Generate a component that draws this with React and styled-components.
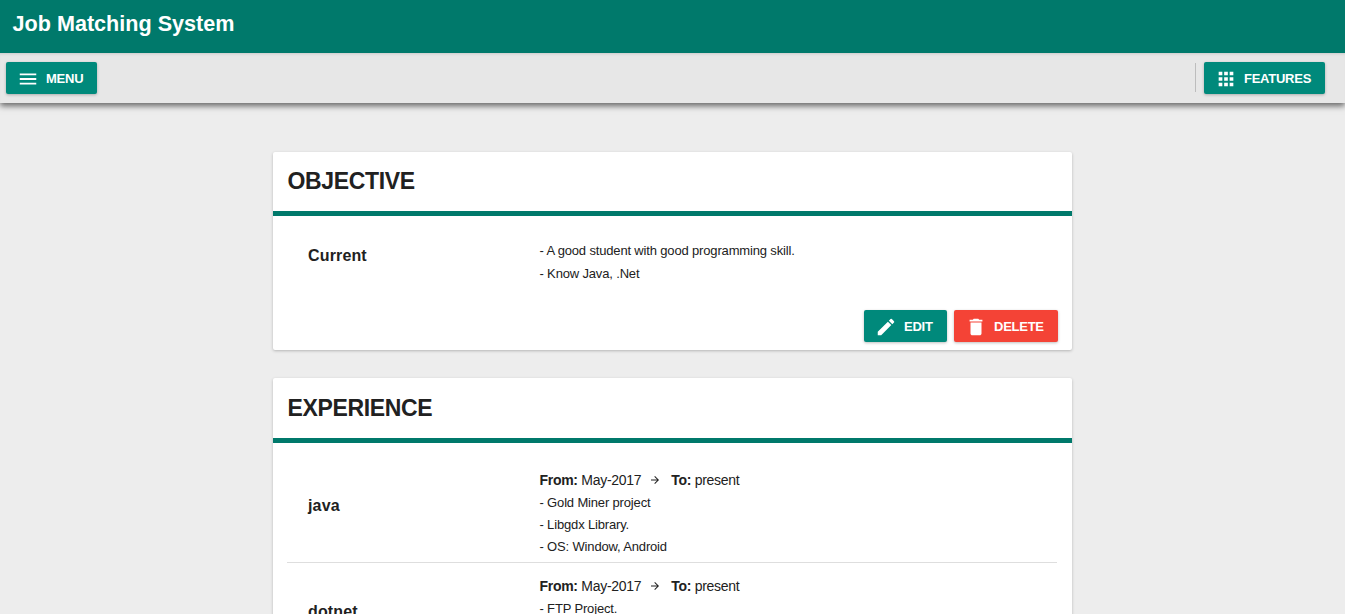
import React from "react";
import styled, { createGlobalStyle } from "styled-components";

const GlobalStyle = createGlobalStyle`
  * { box-sizing: border-box; }
  html, body { margin: 0; height: 100%; overflow: hidden; }
  body {
    background: #ededed;
    color: #212121;
    font-family: "Liberation Sans", Arial, sans-serif;
  }
`;

const Page = styled.div`
  height: 614px;
  overflow: hidden;
`;

const Header = styled.header`
  position: relative;
  z-index: 1;
  height: 53px;
  padding: 10px 12.5px 0;
  background: #00796b;
`;

const Title = styled.h1`
  margin: 0;
  font-size: 21.6px;
  line-height: 27px;
  font-weight: 700;
  color: #fff;
  white-space: nowrap;
`;

const Toolbar = styled.nav`
  display: flex;
  align-items: flex-start;
  justify-content: space-between;
  height: 50px;
  padding: 9px 20px 0 6px;
  background: #e7e7e7;
  box-shadow: 0 3px 6px rgba(0, 0, 0, 0.57), inset 0 3px 3px -2px rgba(0, 0, 0, 0.12);
`;

const ToolbarEnd = styled.div`
  display: flex;
  align-items: flex-start;
`;

const Divider = styled.span`
  width: 1px;
  height: 29px;
  margin: 1px 8px 0 0;
  background: #bdbdbd;
`;

const Button = styled.button`
  display: flex;
  align-items: center;
  width: ${(p) => p.$width}px;
  height: 32px;
  padding: 0 0 0 11px;
  border: 0;
  border-radius: 2px;
  background: ${(p) => (p.$danger ? "#f44336" : "#00897b")};
  box-shadow: 0 1px 3px rgba(0, 0, 0, 0.26);
  color: #fff;
  font: 700 13px/32px "Liberation Sans", Arial, sans-serif;
  letter-spacing: -0.25px;
  white-space: nowrap;

  svg {
    flex: none;
    width: 22px;
    height: 22px;
    margin: 2px 7px 0 0;
    fill: currentColor;
  }
`;

const Label = styled.span`
  padding-top: 1px;
`;

const Main = styled.main`
  display: flex;
  flex-direction: column;
  gap: 28px;
  width: 799px;
  margin: 49px 0 0 273px;
`;

const Card = styled.section`
  background: #fff;
  border-radius: 2px;
  box-shadow: 0 1px 3px rgba(0, 0, 0, 0.24);
`;

const CardHeader = styled.div`
  height: ${(p) => p.$height}px;
  padding: ${(p) => p.$height - 50}px 14.5px 0;
  border-bottom: 5px solid #00796b;
`;

const CardTitle = styled.h2`
  margin: 0;
  font-size: 23px;
  line-height: 30px;
  font-weight: 700;
  letter-spacing: -0.36px;
`;

const Entry = styled.div`
  display: grid;
  grid-template-columns: 231.5px 1fr;
  margin: 0 15px 0 14px;
  padding: ${(p) => p.$padding};
  border-bottom: ${(p) => (p.$last ? "0" : "1px solid #dedede")};
`;

const EntryName = styled.h3`
  margin: 0;
  padding-top: ${(p) => p.$top}px;
  font-size: 16px;
  line-height: 20px;
  font-weight: 700;
  letter-spacing: 0.15px;
`;

const Period = styled.div`
  display: flex;
  align-items: center;
  height: 23px;
  padding-bottom: 1px;
  font-size: 14px;
  line-height: 22px;
  letter-spacing: -0.29px;
  white-space: pre;

  svg {
    width: 12px;
    height: 12px;
    margin: 0 10px 1px 8px;
    fill: currentColor;
  }
`;

const Line = styled.div`
  height: ${(p) => p.$height || 22}px;
  font-size: 13px;
  line-height: 22px;
  letter-spacing: -0.16px;
  white-space: nowrap;
`;

const Actions = styled.div`
  display: flex;
  justify-content: flex-end;
  gap: 7px;
  padding: 0 14px 8px 0;
`;

const paths = {
  menu: "M3 18h18v-2H3v2zm0-5h18v-2H3v2zm0-7v2h18V6H3z",
  apps: "M4 8h4V4H4v4zm6 12h4v-4h-4v4zm-6 0h4v-4H4v4zm0-6h4v-4H4v4zm6 0h4v-4h-4v4zm6-10v4h4V4h-4zm-6 4h4V4h-4v4zm6 6h4v-4h-4v4zm0 6h4v-4h-4v4z",
  edit: "M3 17.25V21h3.75L17.81 9.94l-3.75-3.75L3 17.25zM20.71 7.04a1 1 0 0 0 0-1.41l-2.34-2.34a1 1 0 0 0-1.41 0l-1.83 1.83 3.75 3.75 1.83-1.83z",
  trash: "M6 19c0 1.1.9 2 2 2h8c1.1 0 2-.9 2-2V7H6v12zM19 4h-3.5l-1-1h-5l-1 1H5v2h14V4z",
  arrow: "M12 4l-1.41 1.41L16.17 11H4v2h12.17l-5.58 5.59L12 20l8-8z",
};

const Icon = ({ name }) => (
  <svg viewBox="0 0 24 24" aria-hidden="true">
    <path d={paths[name]} />
  </svg>
);

const Experience = ({ name, lines, last }) => (
  <Entry $padding={last ? "12px 0 20px 21px" : "26px 0 4px 21px"} $last={last}>
    <EntryName $top={27}>{name}</EntryName>
    <div>
      <Period>
        <b>From:</b> May-2017
        <Icon name="arrow" />
        <b>To:</b> present
      </Period>
      {lines.map((line) => (
        <Line key={line}>{line}</Line>
      ))}
    </div>
  </Entry>
);

export default function App() {
  return (
    <Page>
      <GlobalStyle />
      <Header>
        <Title>Job Matching System</Title>
      </Header>
      <Toolbar>
        <Button $width={91}>
          <Icon name="menu" />
          <Label>MENU</Label>
        </Button>
        <ToolbarEnd>
          <Divider />
          <Button $width={121}>
            <Icon name="apps" />
            <Label>FEATURES</Label>
          </Button>
        </ToolbarEnd>
      </Toolbar>
      <Main>
        <Card>
          <CardHeader $height={64}>
            <CardTitle>OBJECTIVE</CardTitle>
          </CardHeader>
          <Entry $padding="24px 0 24px 21px" $last>
            <EntryName $top={6}>Current</EntryName>
            <div>
              <Line $height={23}>- A good student with good programming skill.</Line>
              <Line $height={23}>- Know Java, .Net</Line>
            </div>
          </Entry>
          <Actions>
            <Button $width={83}>
              <Icon name="edit" />
              <Label>EDIT</Label>
            </Button>
            <Button $width={104} $danger>
              <Icon name="trash" />
              <Label>DELETE</Label>
            </Button>
          </Actions>
        </Card>
        <Card>
          <CardHeader $height={65}>
            <CardTitle>EXPERIENCE</CardTitle>
          </CardHeader>
          <Experience
            name="java"
            lines={["- Gold Miner project", "- Libgdx Library.", "- OS: Window, Android"]}
          />
          <Experience name="dotnet" lines={["- FTP Project."]} last />
        </Card>
      </Main>
    </Page>
  );
}
